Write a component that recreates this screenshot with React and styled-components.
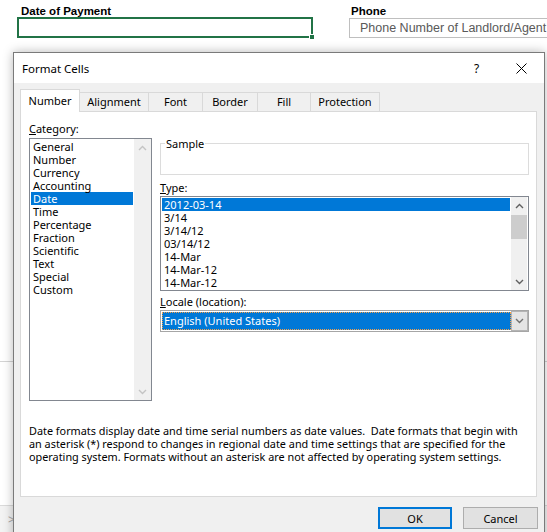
import React from 'react';
import styled, { createGlobalStyle } from 'styled-components';

const UI = `"Noto Sans", "Open Sans", sans-serif`;

const GlobalStyle = createGlobalStyle`
  html, body {
    margin: 0;
    padding: 0;
    background: #fff;
  }
  body {
    font-family: ${UI};
    color: #000;
  }
  * {
    box-sizing: border-box;
  }
`;

const Page = styled.div`
  position: relative;
  width: 547px;
  height: 532px;
  overflow: hidden;
  background: #fff;
  display: flex;
  flex-direction: column;
`;

/* ---------- spreadsheet behind the dialog ---------- */

const FieldsRow = styled.div`
  display: flex;
  gap: 36px;
  padding: 5px 0 0 17px;
`;

const Field = styled.div`
  display: flex;
  flex-direction: column;
  width: ${p => p.$width}px;
  flex-shrink: 0;
`;

const FieldLabel = styled.div`
  font-family: "Liberation Sans", Arial, sans-serif;
  font-weight: bold;
  font-size: 11.5px;
  line-height: 12px;
  padding-left: ${p => p.$indent}px;
`;

const Cell = styled.div`
  position: relative;
  height: ${p => (p.$active ? 21 : 20)}px;
  margin-top: ${p => (p.$active ? 0 : 1)}px;
  border: ${p => (p.$active ? '2px solid #217346' : '1px solid #bfbfbf')};
  padding-left: 10px;
  font-family: "Liberation Sans", Arial, sans-serif;
  font-size: 12.5px;
  line-height: 18px;
  color: #595959;
  white-space: nowrap;
`;

const FillHandle = styled.span`
  position: absolute;
  right: -4px;
  bottom: -4px;
  width: 6px;
  height: 6px;
  background: #217346;
  border: 1px solid #fff;
`;

const GridRow = styled.div`
  height: 324px;
  border-bottom: 1px solid #d4d4d4;
`;

const SheetFill = styled.div`
  flex: 1;
`;

const StatusBar = styled.div`
  height: 27px;
  background: #f3f3f3;
  border-top: 1px solid #dadada;
  padding: 6px 0 0 8px;
  font-size: 12px;
  line-height: 16px;
  color: #a6a6a6;
`;

/* ---------- dialog ---------- */

const Dialog = styled.div`
  position: absolute;
  left: 13px;
  top: 52px;
  width: 532px;
  height: 492px;
  border: 1px solid #7a7a7a;
  background: #f0f0f0;
  box-shadow: 0 0 10px rgba(0, 0, 0, 0.28);
  display: flex;
  flex-direction: column;
`;

const TitleBar = styled.div`
  height: 30px;
  background: #fff;
  display: flex;
  align-items: center;
  padding-left: 8px;
  font-size: 11.5px;
`;

const TitleText = styled.div`
  flex: 1;
`;

const TitleButton = styled.div`
  width: 45px;
  height: 30px;
  display: flex;
  align-items: center;
  justify-content: center;
  font-size: 12px;
`;

const Body = styled.div`
  display: flex;
  flex-direction: column;
  padding: 7px 7px 0 6px;
`;

const Tabs = styled.div`
  display: flex;
  align-items: flex-end;
  height: 22px;
  margin-bottom: -1px;
  position: relative;
  z-index: 1;
`;

const Tab = styled.div`
  width: ${p => p.$width}px;
  height: ${p => (p.$active ? 23 : 20)}px;
  margin-left: ${p => (p.$first ? 0 : -1)}px;
  border: 1px solid #d9d9d9;
  border-bottom: ${p => (p.$active ? 'none' : '1px solid #d9d9d9')};
  background: ${p => (p.$active ? '#fff' : '#f0f0f0')};
  position: relative;
  z-index: ${p => (p.$active ? 2 : 1)};
  display: flex;
  justify-content: center;
  padding-top: ${p => (p.$active ? 4 : 2)}px;
  font-size: 11px;
  line-height: 14px;
`;

const Panel = styled.div`
  height: 386px;
  background: #fff;
  border: 1px solid #d9d9d9;
  padding: 10px 7px 0 8px;
`;

const Columns = styled.div`
  display: grid;
  grid-template-columns: 123px 369px;
  column-gap: 8px;
`;

const Column = styled.div`
  display: flex;
  flex-direction: column;
`;

const Label = styled.div`
  font-size: 11px;
  line-height: 13px;
  margin-top: ${p => p.$top || 0}px;
  margin-bottom: ${p => p.$bottom || 0}px;
`;

const Group = styled.fieldset`
  margin: 15px 0 0;
  padding: 0;
  height: 38px;
  border: 1px solid #dcdcdc;

  legend {
    margin-left: 4px;
    padding: 0 1px;
    font-size: 11px;
    line-height: 13px;
  }
`;

const ListBox = styled.div`
  height: ${p => p.$height}px;
  border: 1px solid #828790;
  background: #fff;
  display: flex;
`;

const Items = styled.div`
  flex: 1;
  padding: 1px;
  overflow: hidden;
`;

const Item = styled.div`
  height: 13px;
  line-height: 13px;
  padding-left: 2px;
  font-size: 11px;
  white-space: nowrap;
  background: ${p => (p.$selected ? '#0078d7' : 'transparent')};
  color: ${p => (p.$selected ? '#fff' : '#000')};
`;

const ScrollBar = styled.div`
  width: ${p => p.$width}px;
  margin-right: ${p => p.$gap}px;
  background: #f0f0f0;
  display: flex;
  flex-direction: column;
`;

const ArrowBox = styled.div`
  height: 17px;
  display: flex;
  align-items: center;
  justify-content: center;
`;

const Thumb = styled.div`
  height: 24px;
  margin-top: 1px;
  background: #cdcdcd;
`;

const Track = styled.div`
  flex: 1;
`;

const Select = styled.div`
  height: 22px;
  border: 1px solid #a6a6a6;
  background: #fff;
  display: flex;
  padding: 1px 0 1px 1px;
`;

const SelectValue = styled.div`
  flex: 1;
  background: #0078d7;
  border: 1px dotted #f5a04a;
  color: #fff;
  font-size: 11px;
  line-height: 16px;
  padding-left: 1px;
`;

const SelectButton = styled.div`
  width: 17px;
  margin: -1px 0;
  background: #e5e5e5;
  border: 1px solid #b4b4b4;
  display: flex;
  align-items: center;
  justify-content: center;
`;

const Description = styled.div`
  margin-top: 23px;
  font-size: 10.85px;
  line-height: 13px;
  white-space: pre;
`;

const Buttons = styled.div`
  display: flex;
  justify-content: flex-end;
  gap: 11px;
  margin: 10px -1px 0 0;
`;

const Button = styled.div`
  width: ${p => p.$width}px;
  height: 22px;
  background: #e1e1e1;
  border: ${p => (p.$default ? '2px solid #0078d7' : '1px solid #adadad')};
  display: flex;
  align-items: center;
  justify-content: center;
  font-size: 11px;
`;

const Chevron = ({ up, color }) => (
  <svg width="9" height="6" viewBox="0 0 9 6">
    <polyline
      points={up ? '1,5 4.5,1.5 8,5' : '1,1 4.5,4.5 8,1'}
      fill="none"
      stroke={color}
      strokeWidth="1.4"
    />
  </svg>
);

const CloseIcon = () => (
  <svg width="11" height="11" viewBox="0 0 11 11">
    <path d="M0.5 0.5 L10.5 10.5 M10.5 0.5 L0.5 10.5" stroke="#000" strokeWidth="1" />
  </svg>
);

const tabs = [
  ['Number', 60],
  ['Alignment', 70],
  ['Font', 55],
  ['Border', 56],
  ['Fill', 54],
  ['Protection', 70],
];

const categories = [
  'General', 'Number', 'Currency', 'Accounting', 'Date', 'Time',
  'Percentage', 'Fraction', 'Scientific', 'Text', 'Special', 'Custom',
];

const types = ['2012-03-14', '3/14', '3/14/12', '03/14/12', '14-Mar', '14-Mar-12', '14-Mar-12'];

const description =
  'Date formats display date and time serial numbers as date values.  Date formats that begin with\n' +
  'an asterisk (*) respond to changes in regional date and time settings that are specified for the\n' +
  'operating system. Formats without an asterisk are not affected by operating system settings.';

export default function App() {
  return (
    <>
      <GlobalStyle />
      <Page>
        <FieldsRow>
          <Field $width={296}>
            <FieldLabel $indent={4}>Date of Payment</FieldLabel>
            <Cell $active>
              <FillHandle />
            </Cell>
          </Field>
          <Field $width={220}>
            <FieldLabel $indent={2}>Phone</FieldLabel>
            <Cell>Phone Number of Landlord/Agent</Cell>
          </Field>
        </FieldsRow>
        <GridRow />
        <SheetFill />
        <StatusBar>&gt;</StatusBar>

        <Dialog>
          <TitleBar>
            <TitleText>Format Cells</TitleText>
            <TitleButton>?</TitleButton>
            <TitleButton>
              <CloseIcon />
            </TitleButton>
          </TitleBar>
          <Body>
            <Tabs>
              {tabs.map(([name, w], i) => (
                <Tab key={name} $width={w} $first={i === 0} $active={i === 0}>
                  {name}
                </Tab>
              ))}
            </Tabs>
            <Panel>
              <Columns>
                <Column>
                  <Label $bottom={3}>
                    <u>C</u>ategory:
                  </Label>
                  <ListBox $height={263}>
                    <Items>
                      {categories.map(c => (
                        <Item key={c} $selected={c === 'Date'}>{c}</Item>
                      ))}
                    </Items>
                    <ScrollBar $width={17} $gap={0}>
                      <ArrowBox><Chevron up color="#c4c4c4" /></ArrowBox>
                      <Track />
                      <ArrowBox><Chevron color="#c4c4c4" /></ArrowBox>
                    </ScrollBar>
                  </ListBox>
                </Column>
                <Column>
                  <Group>
                    <legend>Sample</legend>
                  </Group>
                  <Label $top={6} $bottom={2}>
                    <u>T</u>ype:
                  </Label>
                  <ListBox $height={95}>
                    <Items>
                      {types.map((t, i) => (
                        <Item key={i} $selected={i === 0}>{t}</Item>
                      ))}
                    </Items>
                    <ScrollBar $width={16} $gap={1}>
                      <ArrowBox><Chevron up color="#606060" /></ArrowBox>
                      <Thumb />
                      <Track />
                      <ArrowBox><Chevron color="#606060" /></ArrowBox>
                    </ScrollBar>
                  </ListBox>
                  <Label $top={4} $bottom={2}>
                    <u>L</u>ocale (location):
                  </Label>
                  <Select>
                    <SelectValue>English (United States)</SelectValue>
                    <SelectButton>
                      <Chevron color="#707070" />
                    </SelectButton>
                  </Select>
                </Column>
              </Columns>
              <Description>{description}</Description>
            </Panel>
            <Buttons>
              <Button $width={74} $default>OK</Button>
              <Button $width={75}>Cancel</Button>
            </Buttons>
          </Body>
        </Dialog>
      </Page>
    </>
  );
}
